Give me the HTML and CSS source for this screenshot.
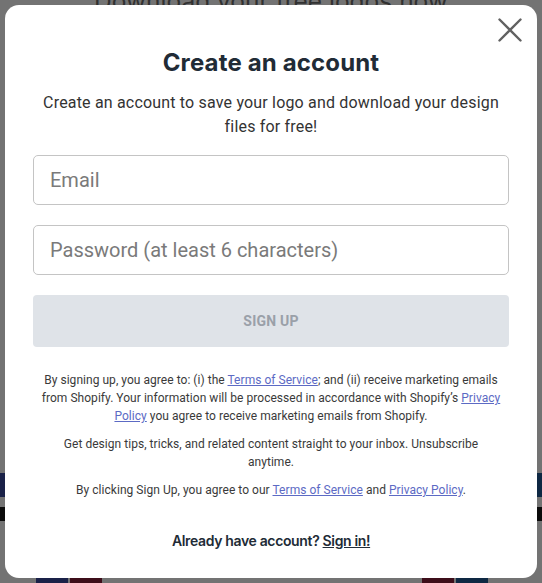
FILE: index.html
```html
<!DOCTYPE html>
<html lang="en">
<head>
<meta charset="utf-8">
<title>Create an account</title>
<link rel="stylesheet" href="styles.css">
</head>
<body>
<div class="page">
  <h2 class="page-title">Download your free logos now</h2>
  <div class="band">
    <span class="band-box"></span>
    <span class="band-box"></span>
  </div>
  <div class="tiles">
    <div class="tile-group">
      <span class="tile navy"></span><span class="tile maroon"></span>
    </div>
    <div class="tile-group">
      <span class="tile maroon"></span><span class="tile teal"></span>
    </div>
  </div>
</div>
<div class="overlay"></div>
<div class="modal" role="dialog">
  <button class="close" aria-label="Close">
    <svg width="24" height="24" viewBox="0 0 24 24"><path d="M1.5 1.5L22.5 22.5M22.5 1.5L1.5 22.5" stroke="#616161" stroke-width="2.4" stroke-linecap="round" fill="none"/></svg>
  </button>
  <h1 class="title">Create an account</h1>
  <p class="subtitle">Create an account to save your logo and download your design files for free!</p>
  <form class="form">
    <input class="field" type="email" placeholder="Email">
    <input class="field" type="password" placeholder="Password (at least 6 characters)">
    <button class="submit" type="button">SIGN UP</button>
  </form>
  <div class="legal">
    <p>By signing up, you agree to: (i) the <a href="#">Terms of Service</a>; and (ii) receive marketing emails from Shopify. Your information will be processed in accordance with Shopify’s <a href="#">Privacy Policy</a> you agree to receive marketing emails from Shopify.</p>
    <p>Get design tips, tricks, and related content straight to your inbox. Unsubscribe anytime.</p>
    <p>By clicking Sign Up, you agree to our <a href="#">Terms of Service</a> and <a href="#">Privacy Policy</a>.</p>
  </div>
  <p class="signin">Already have account? <a href="#">Sign in!</a></p>
</div>
</body>
</html>
```
FILE: styles.css
```css
* { box-sizing: border-box; }
html, body { margin: 0; padding: 0; }
body {
  width: 542px;
  height: 583px;
  overflow: hidden;
  position: relative;
  font-family: Roboto, "Liberation Sans", sans-serif;
  background: #ffffff;
}
.page {
  height: 583px;
  display: flex;
  flex-direction: column;
  background: #ffffff;
}
.page-title {
  margin: -14px 0 0;
  font-family: Inter, sans-serif;
  font-weight: 400;
  font-size: 24.5px;
  line-height: 30px;
  text-align: center;
  color: #6e6e6e;
}
.band {
  margin-top: 457px;
  height: 24px;
  display: flex;
  justify-content: space-between;
  align-items: flex-end;
  background: linear-gradient(90deg, #3a4aa0 0, #3a4aa0 50%, #1f5a96 50%, #1f5a96 100%);
}
.band-box {
  display: block;
  width: 8px;
  height: 14px;
  margin-bottom: -24px;
  background: #1a1a1a;
}
.tiles {
  margin-top: auto;
  display: flex;
  justify-content: space-between;
  padding: 0 54px 0 36px;
}
.tile-group { display: flex; gap: 2px; }
.tile { display: block; width: 32px; height: 30px; }
.navy { background: #3a4aa0; }
.maroon { background: #8a1f3a; }
.teal { background: #1f5a96; }
.overlay {
  position: absolute;
  inset: 0;
  background: rgba(0, 0, 0, 0.55);
}
.modal {
  position: absolute;
  left: 5px;
  top: 5px;
  width: 532px;
  height: 573px;
  background: #ffffff;
  border-radius: 14px;
  padding: 42px 28px 0;
  display: flex;
  flex-direction: column;
  align-items: stretch;
  text-align: center;
}
.close {
  position: absolute;
  top: 13px;
  right: 15px;
  width: 24px;
  height: 24px;
  padding: 0;
  border: 0;
  background: none;
  display: flex;
}
.title {
  margin: 0;
  font-family: Inter, sans-serif;
  font-weight: 700;
  font-size: 24px;
  line-height: 32px;
  letter-spacing: 0.15px;
  color: #212b36;
}
.subtitle {
  margin: 12px 0 0;
  font-size: 16px;
  line-height: 24px;
  letter-spacing: 0.18px;
  color: #333333;
}
.form {
  margin-top: 16px;
  display: flex;
  flex-direction: column;
  gap: 20px;
}
.field {
  height: 50px;
  border: 1px solid #c4c4c4;
  border-radius: 5px;
  padding: 0 16px;
  font-family: Roboto, sans-serif;
  font-size: 20px;
  color: #333;
  outline: none;
}
.field::placeholder { color: #7a7a7a; }
.submit {
  height: 52px;
  border: 0;
  border-radius: 4px;
  background: #dfe3e8;
  color: #9aa0a8;
  font-family: Roboto, sans-serif;
  font-weight: 700;
  font-size: 14px;
  letter-spacing: 0.2px;
}
.legal {
  width: 461px;
  margin: 24px auto 0;
  font-size: 12px;
  line-height: 18px;
  letter-spacing: 0.04px;
  color: #3a3a3a;
  display: flex;
  flex-direction: column;
  gap: 10px;
}
.legal p { margin: 0; }
.legal a { color: #5c6ac4; }
.signin {
  margin: 32px 0 0;
  font-family: Inter, sans-serif;
  font-weight: 600;
  font-size: 14px;
  line-height: 20px;
  letter-spacing: -0.35px;
  color: #212b36;
}
.signin a { color: #212b36; }
```
